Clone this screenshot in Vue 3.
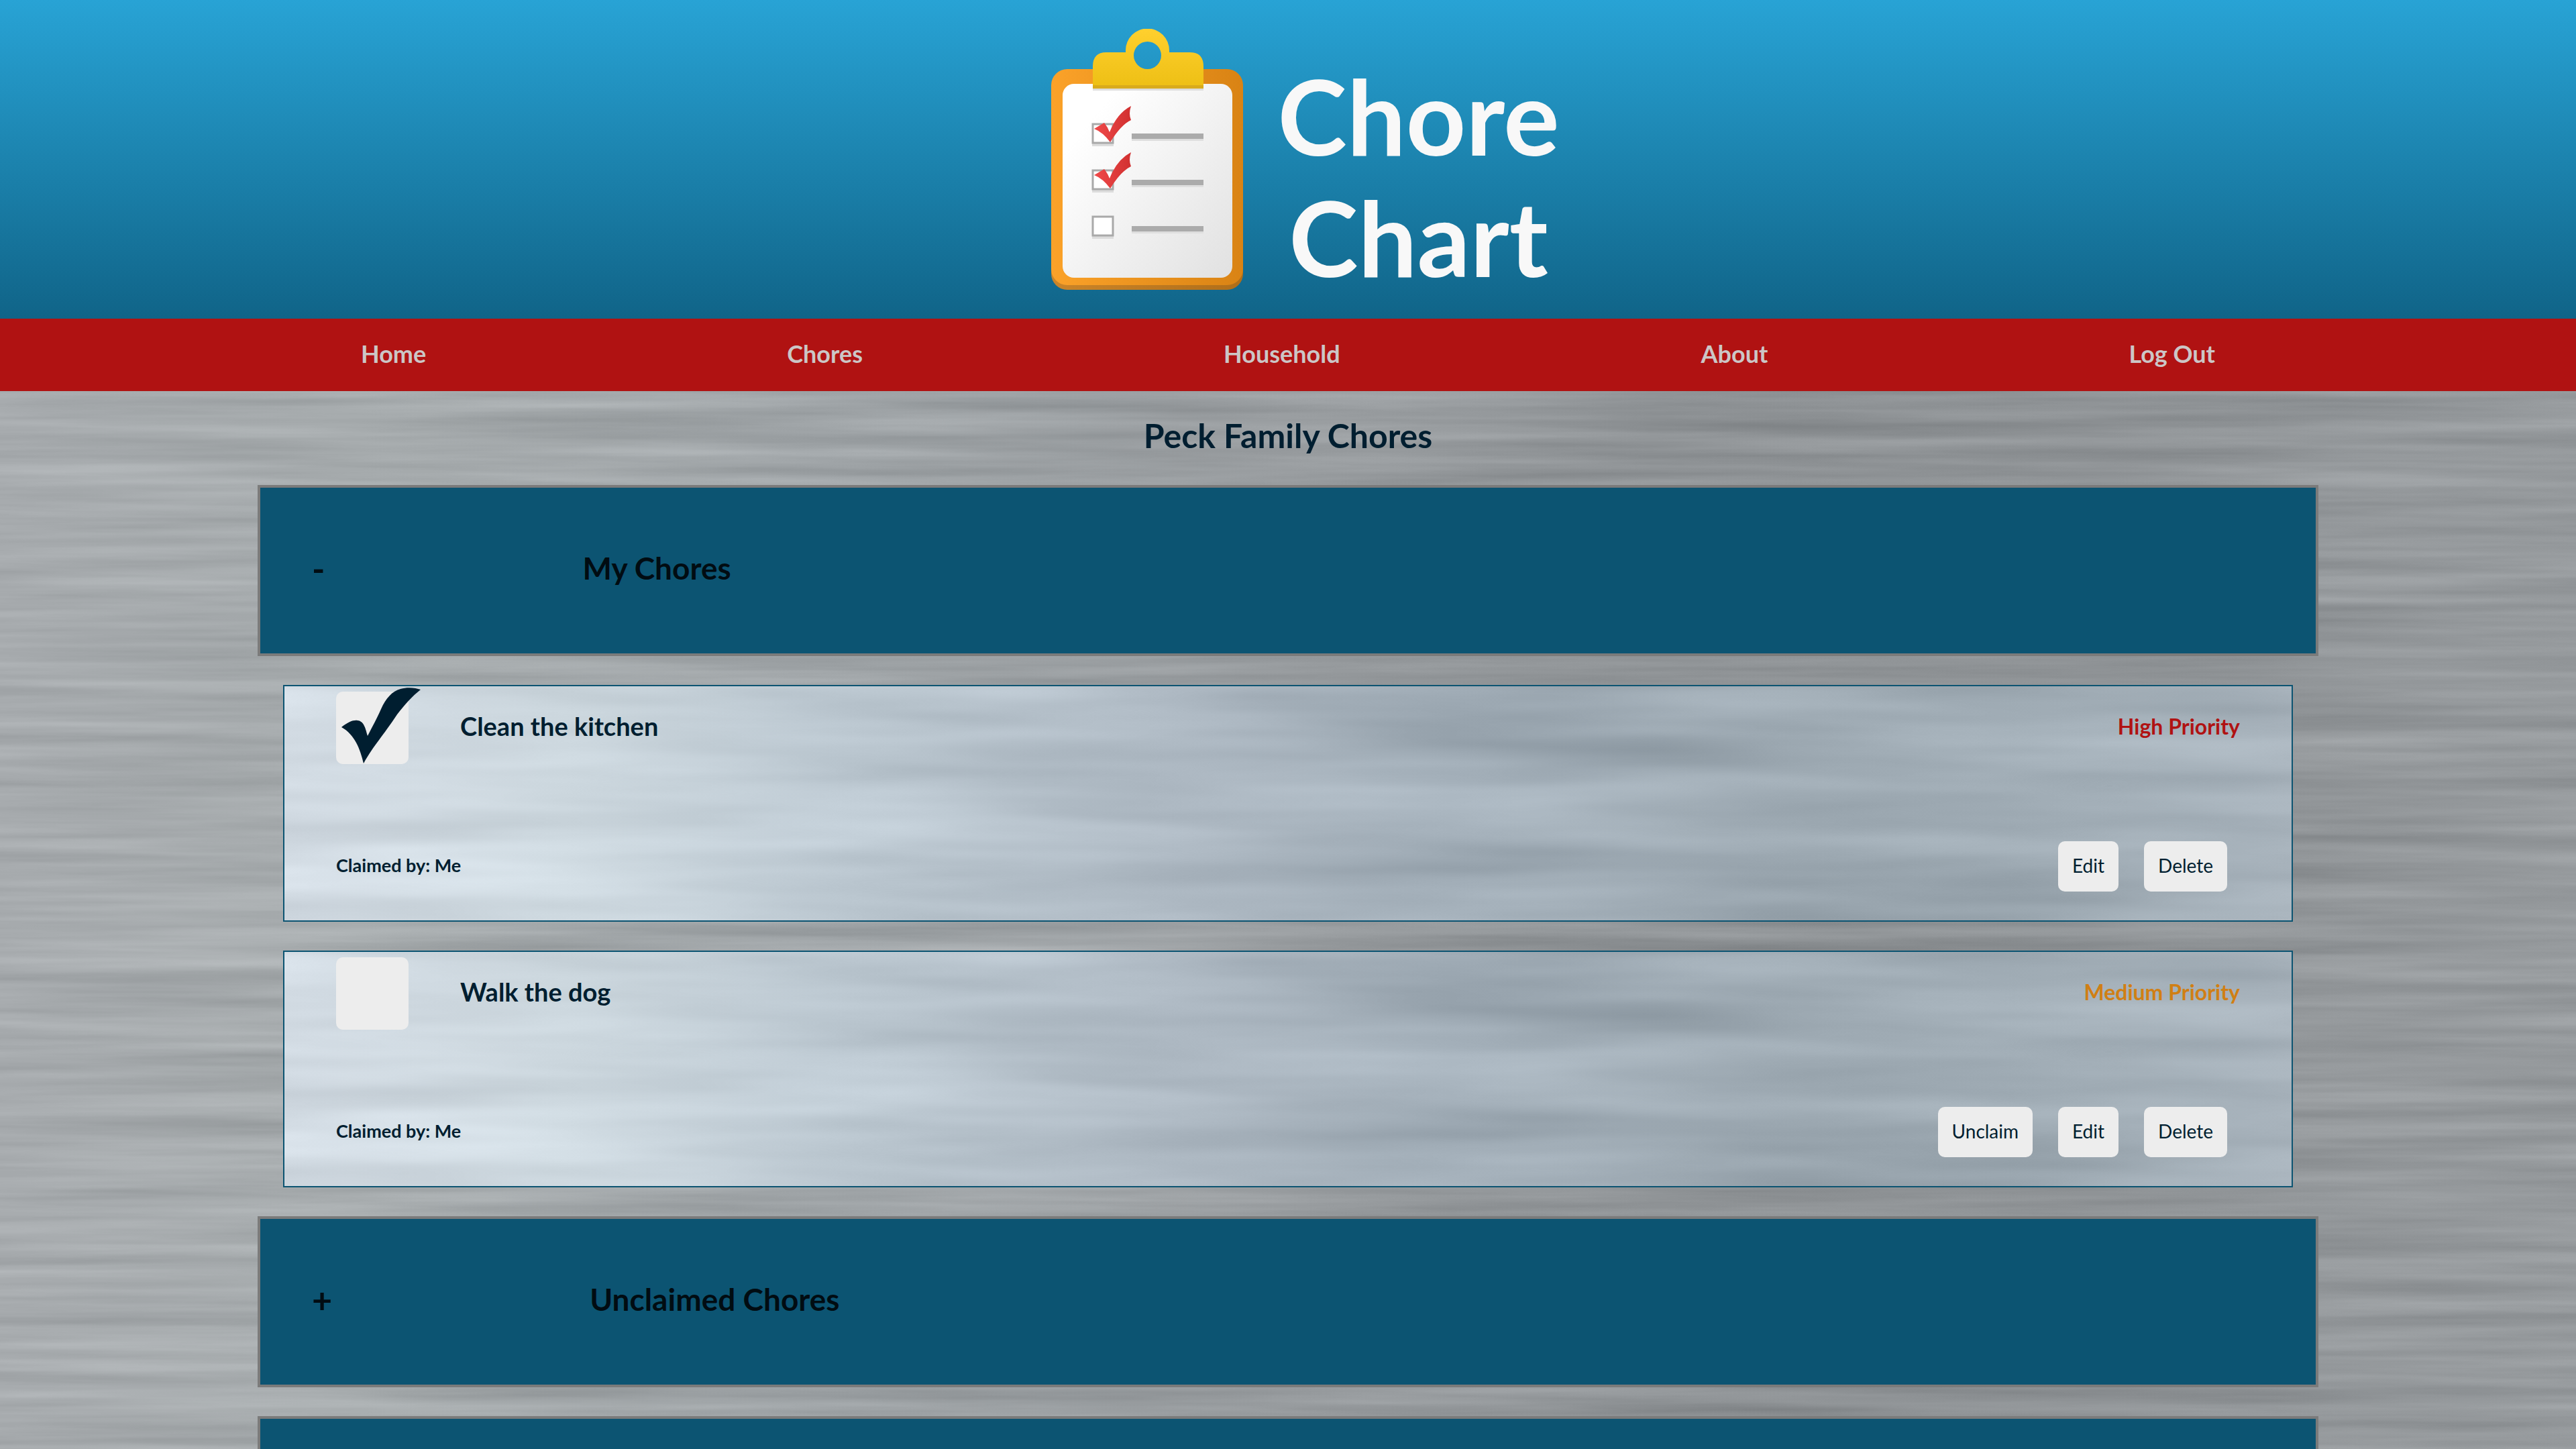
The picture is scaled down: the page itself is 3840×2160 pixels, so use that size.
<script setup>
import { ref } from 'vue'

const links = ['Home', 'Chores', 'Household', 'About', 'Log Out']

const chores = ref([
  { id: 1, title: 'Clean the kitchen', level: 'high', priority: 'High Priority', done: true, actions: ['Edit', 'Delete'] },
  { id: 2, title: 'Walk the dog', level: 'medium', priority: 'Medium Priority', done: false, actions: ['Unclaim', 'Edit', 'Delete'] },
])

const rows = [0, 69, 138]
</script>

<template>
  <div class="page">
    <svg class="defs" aria-hidden="true">
      <filter id="brushed" x="0" y="0" width="100%" height="100%" color-interpolation-filters="sRGB">
        <feTurbulence type="fractalNoise" baseFrequency="0.0016 0.045" numOctaves="4" seed="7" />
        <feColorMatrix values="1 0 0 0 0  1 0 0 0 0  1 0 0 0 0  0 0 0 0 1" result="grain" />
        <feComposite in="SourceGraphic" in2="grain" operator="arithmetic" k1="0" k2="1" k3="0.15" k4="-0.075" />
      </filter>
      <filter id="polished" x="0" y="0" width="100%" height="100%" color-interpolation-filters="sRGB">
        <feTurbulence type="fractalNoise" baseFrequency="0.0014 0.016" numOctaves="3" seed="21" />
        <feColorMatrix values="1 0 0 0 0  1 0 0 0 0  1 0 0 0 0  0 0 0 0 1" result="grain" />
        <feComposite in="SourceGraphic" in2="grain" operator="arithmetic" k1="0" k2="1" k3="0.18" k4="-0.1" />
      </filter>
    </svg>
    <div class="metal metal--page"></div>

    <header class="banner">
      <svg class="logo" viewBox="-52 0 389 389" aria-hidden="true">
        <defs>
          <linearGradient id="board" x1="0" y1="0" x2="1" y2="0">
            <stop offset="0" stop-color="#fba229" />
            <stop offset="1" stop-color="#d98314" />
          </linearGradient>
          <linearGradient id="edge" x1="0" y1="0" x2="1" y2="0">
            <stop offset="0" stop-color="#cb8529" />
            <stop offset="1" stop-color="#b06e19" />
          </linearGradient>
          <linearGradient id="paper" x1="0.15" y1="0.2" x2="1" y2="1">
            <stop offset="0" stop-color="#ffffff" />
            <stop offset="1" stop-color="#e1e1e1" />
          </linearGradient>
          <linearGradient id="clip" x1="0" y1="0" x2="0" y2="1">
            <stop offset="0" stop-color="#ffd02e" />
            <stop offset="1" stop-color="#edbf14" />
          </linearGradient>
          <linearGradient id="tick" x1="0" y1="0" x2="1" y2="0">
            <stop offset="0" stop-color="#f04a4a" />
            <stop offset="1" stop-color="#d13030" />
          </linearGradient>
        </defs>
        <rect x="0" y="67" width="286" height="322" rx="24" fill="url(#edge)" />
        <rect x="0" y="60" width="286" height="322" rx="24" fill="url(#board)" />
        <rect x="17" y="82" width="253" height="289" rx="17" fill="url(#paper)" />
        <rect x="62" y="89" width="165" height="3" fill="#dedede" />
        <path
          d="M62 89V56Q62 35 82 35H111V32A32.500 32.500 0 0 1 176 32V35H207Q227 35 227 56V89ZM143.500 19A20.500 20.500 0 1 0 143.500 60A20.500 20.500 0 1 0 143.500 19Z"
          fill="url(#clip)" fill-rule="evenodd"
        />
        <rect x="62" y="84" width="165" height="5" fill="#d9ab1c" />
        <g v-for="(y, i) in rows" :key="y" :transform="`translate(0 ${y})`">
          <rect x="61" y="171" width="32" height="4" fill="#dcdcdc" />
          <rect x="62" y="142" width="30" height="28" fill="#fff" stroke="#a9a9a9" stroke-width="3" />
          <rect x="120" y="164" width="107" height="3" fill="#dedede" />
          <rect x="120" y="156" width="107" height="8" fill="#ababab" />
          <path
            v-if="i < 2"
            d="M64 149L79 140Q84 146 87 154Q98 126 119 115Q115 127 119 136Q104 143 88 169Q77 154 64 149Z"
            fill="url(#tick)"
          />
        </g>
      </svg>
      <h1 class="brand">Chore<br />Chart</h1>
    </header>

    <nav class="nav">
      <a v-for="l in links" :key="l" href="#">{{ l }}</a>
    </nav>

    <main class="content">
      <h2 class="heading">Peck Family Chores</h2>

      <button class="panel" type="button" aria-expanded="true">
        <span class="sign">-</span><span>My Chores</span>
      </button>

      <article v-for="c in chores" :key="c.id" class="card">
        <div class="metal metal--card"></div>
        <div class="row">
          <label class="chore">
            <span class="box">
              <input v-model="c.done" type="checkbox" />
              <svg v-if="c.done" class="mark" viewBox="0 -8 128 116" aria-hidden="true">
                <path d="M8 53C18 45 26 42 32 43C42 44 44 56 47 66C55 50 59 44 67 26C74 10 84 -1 96 -4C106 -7 118 -6 126 -3C113 7 102 20 91 34C70 66 56 80 41 107C36 86 28 64 8 53Z" />
              </svg>
            </span>
            <span class="title">{{ c.title }}</span>
          </label>
          <span class="priority" :class="c.level">{{ c.priority }}</span>
        </div>
        <div class="row">
          <span class="claimed">Claimed by: Me</span>
          <div class="actions">
            <button v-for="a in c.actions" :key="a" type="button" class="action">{{ a }}</button>
          </div>
        </div>
      </article>

      <button class="panel" type="button" aria-expanded="false">
        <span class="sign">+</span><span>Unclaimed Chores</span>
      </button>
      <div class="panel"></div>
    </main>
  </div>
</template>

<style>
body {
  margin: 0;
  background: #9a9ea1;
}
</style>

<style scoped>
* {
  box-sizing: border-box;
}
.page {
  position: relative;
  isolation: isolate;
  min-height: 100vh;
  font-family: Lato, sans-serif;
  font-weight: 700;
  color: #001e30;
}
.defs {
  position: absolute;
  width: 0;
  height: 0;
}
.metal {
  position: absolute;
  inset: 0;
  z-index: -1;
}
.metal--page {
  background: linear-gradient(90deg, #a7abae 0%, #a6abad 14%, #9fa4a7 32%, #999da0 50%, #8e9295 64%, #8f9396 82%, #94989b 92%, #969a9d 100%);
  filter: url(#brushed);
}
.metal--card {
  background: linear-gradient(90deg, #d4dde5 0%, #ced9e0 14%, #c0ccd5 28%, #b2bdc7 44%, #a3afb9 58%, #9fabb4 76%, #a5b1ba 90%, #aab5be 100%);
  filter: url(#polished);
}
.banner {
  display: flex;
  align-items: center;
  justify-content: center;
  height: 475px;
  background: linear-gradient(#28a3d5, #106488);
}
.logo {
  width: 389px;
  height: 389px;
}
.brand {
  margin: 48px 0 0;
  font-size: 156px;
  line-height: 181px;
  text-align: center;
  color: #f8f8f8;
}
.nav {
  display: flex;
  align-items: center;
  justify-content: space-evenly;
  height: 108px;
  padding-bottom: 4px;
  background: #b01212;
}
.nav a {
  font-size: 36px;
  line-height: 44px;
  color: #ccc6c6;
  text-decoration: none;
}
.content {
  display: flex;
  flex-direction: column;
  gap: 43px;
  padding: 0 10% 43px;
}
.heading {
  margin: 0;
  padding: 36px 0 1px;
  font-size: 50px;
  line-height: 60px;
  text-align: center;
}
.panel {
  display: flex;
  align-items: center;
  gap: 384px;
  width: 100%;
  min-height: 255px;
  padding: 0 77px 8px;
  border: 4px solid #7b7b7b;
  background: #0c5472;
  color: #010c12;
  font: inherit;
  font-size: 46px;
  text-align: left;
}
.sign {
  font-size: 52px;
}
.card {
  position: relative;
  isolation: isolate;
  display: flex;
  flex-direction: column;
  gap: 115px;
  margin: 0 38px;
  padding: 8px 77px 43px;
  border: 2px solid #0c5472;
}
.row,
.chore,
.actions {
  display: flex;
  align-items: center;
}
.row {
  justify-content: space-between;
}
.chore {
  gap: 77px;
}
.box {
  position: relative;
  width: 108px;
  height: 108px;
}
.box input {
  appearance: none;
  display: block;
  width: 108px;
  height: 108px;
  margin: 0;
  border-radius: 10px;
  background: #ededed;
}
.mark {
  position: absolute;
  left: 0;
  bottom: 0;
  width: 128px;
  height: 116px;
  fill: #001e30;
}
.title,
.priority {
  padding-bottom: 6px;
}
.title {
  font-size: 38px;
}
.priority {
  font-size: 32px;
}
.high {
  color: #b01212;
}
.medium {
  color: #d07f14;
}
.claimed {
  padding-bottom: 4px;
  font-size: 27px;
}
.actions {
  gap: 38px;
  padding-right: 19px;
}
.action {
  height: 75px;
  padding: 0 21px 4px;
  border: 0;
  border-radius: 10px;
  background: #ededed;
  color: #001e30;
  font: inherit;
  font-size: 28px;
  font-weight: 400;
}
</style>
